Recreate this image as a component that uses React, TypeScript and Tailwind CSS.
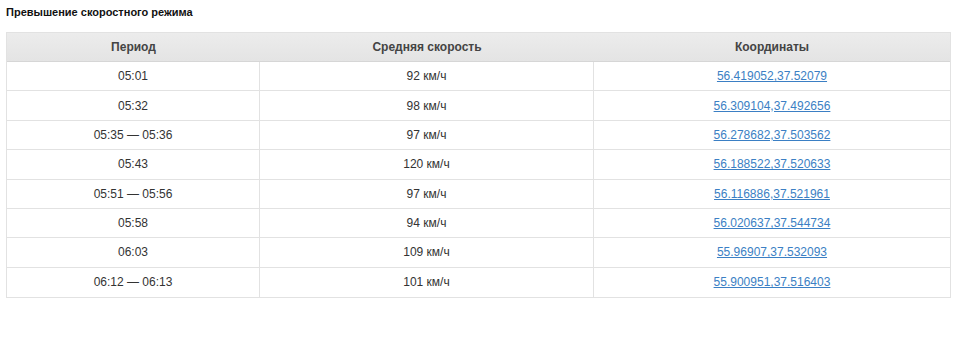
import React from 'react';

const rows = [
  ['05:01', '92 км/ч', '56.419052,37.52079'],
  ['05:32', '98 км/ч', '56.309104,37.492656'],
  ['05:35 — 05:36', '97 км/ч', '56.278682,37.503562'],
  ['05:43', '120 км/ч', '56.188522,37.520633'],
  ['05:51 — 05:56', '97 км/ч', '56.116886,37.521961'],
  ['05:58', '94 км/ч', '56.020637,37.544734'],
  ['06:03', '109 км/ч', '55.96907,37.532093'],
  ['06:12 — 06:13', '101 км/ч', '55.900951,37.516403'],
];

const App: React.FC = () => {
  return (
    <div className="w-[960px] h-[341px] bg-white px-[6px] pt-[5px] font-['Liberation_Sans',Arial,sans-serif] text-[#333]">
      <h3 className="text-[11px] leading-[14px] font-bold text-[#111]">Превышение скоростного режима</h3>
      <div className="mt-[13px] w-[945px] border border-[#e2e2e2]">
        <div className="grid grid-cols-[253px_334px_1fr] h-[29px] bg-gradient-to-b from-[#ececec] to-[#e4e4e4] border-b border-[#d6d6d6] text-[12px] font-bold text-[#444] items-center text-center">
          <div>Период</div>
          <div>Средняя скорость</div>
          <div>Координаты</div>
        </div>
        {rows.map((r, i) => (
          <div
            key={i}
            className="grid grid-cols-[253px_334px_1fr] h-[29.375px] border-b border-[#e2e2e2] last:border-b-0 text-[12px] text-[#333] text-center"
          >
            <div className="flex items-center justify-center border-r border-[#e2e2e2]">{r[0]}</div>
            <div className="flex items-center justify-center border-r border-[#e2e2e2]">{r[1]}</div>
            <div className="flex items-center justify-center">
              <a href="#" className="text-[#3b7fc4] underline">{r[2]}</a>
            </div>
          </div>
        ))}
      </div>
    </div>
  );
};

export default App;
